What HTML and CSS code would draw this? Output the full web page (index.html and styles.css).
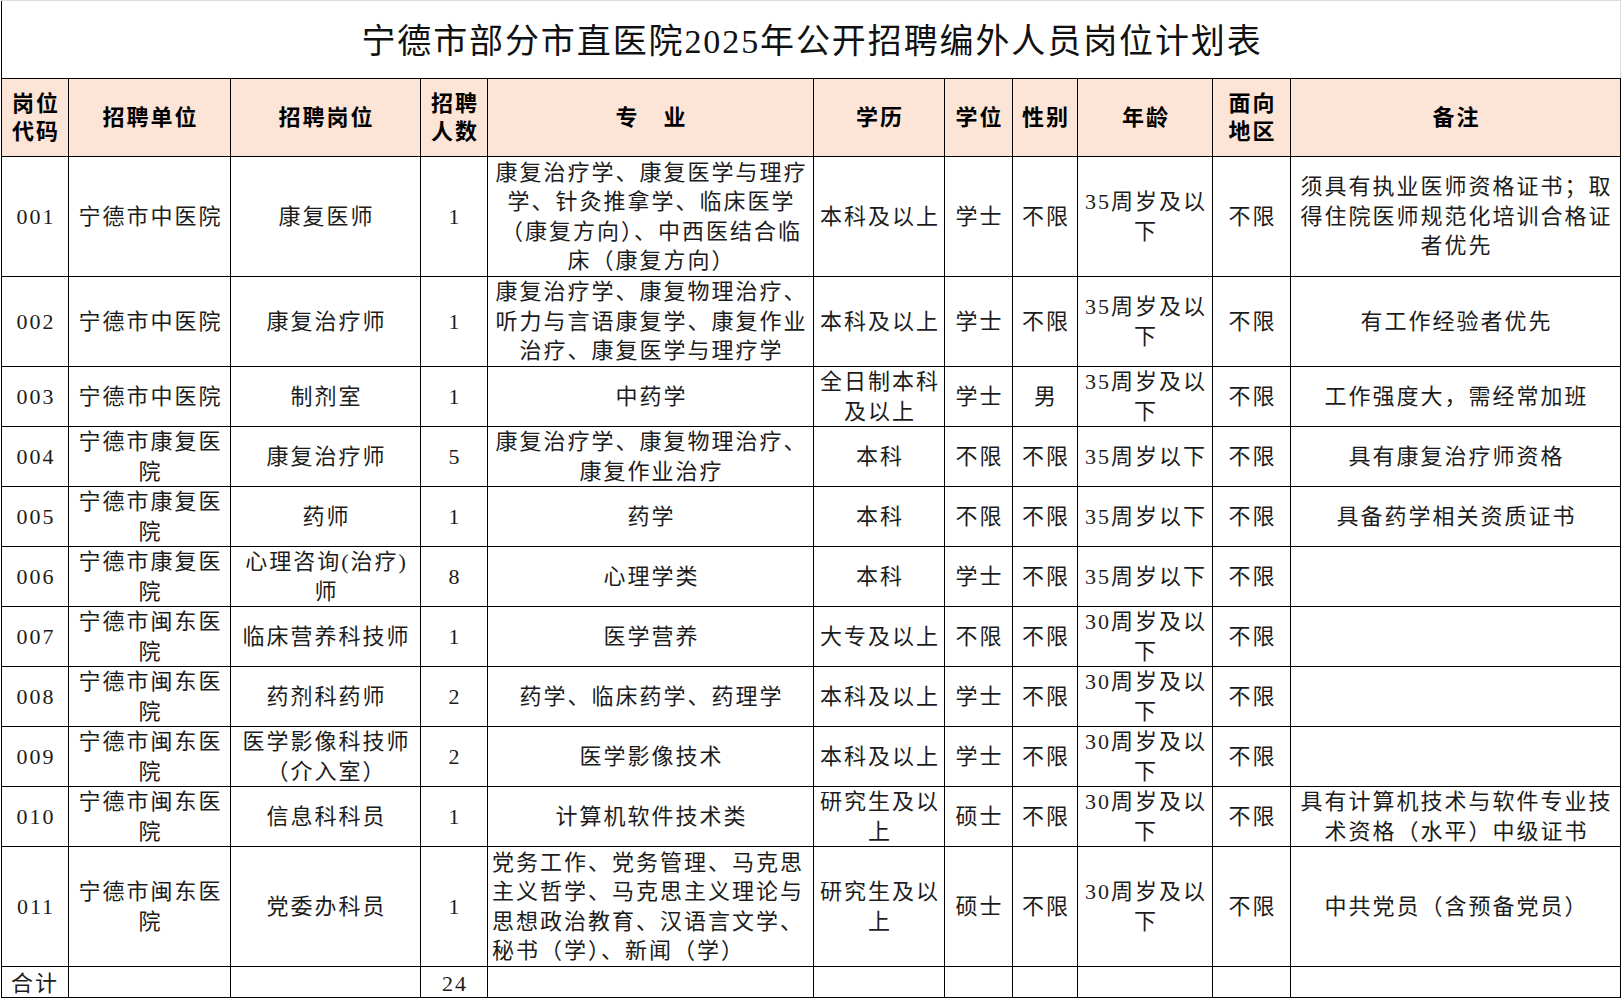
FILE: index.html
```html
<!DOCTYPE html>
<html lang="zh-CN">
<head>
<meta charset="utf-8">
<title>宁德市部分市直医院2025年公开招聘编外人员岗位计划表</title>
<link rel="stylesheet" href="styles.css">
</head>
<body>
<table class="sheet">
  <colgroup>
    <col class="c-code"><col class="c-unit"><col class="c-post"><col class="c-num"><col class="c-major"><col class="c-edu"><col class="c-degree"><col class="c-sex"><col class="c-age"><col class="c-area"><col class="c-note">
  </colgroup>
  <tr class="r-title"><td class="title" colspan="11">宁德市部分市直医院2025年公开招聘编外人员岗位计划表</td></tr>
  <tr class="r-head">
    <th>岗位<br>代码</th><th>招聘单位</th><th>招聘岗位</th><th>招聘<br>人数</th><th>专　业</th><th>学历</th><th>学位</th><th>性别</th><th>年龄</th><th>面向<br>地区</th><th>备注</th>
  </tr>
  <tr class="r4">
    <td>001</td><td>宁德市中医院</td><td>康复医师</td><td>1</td>
    <td>康复治疗学、康复医学与理疗<br>学、针灸推拿学、临床医学<br>（康复方向）、中西医结合临<br>床（康复方向）</td>
    <td>本科及以上</td><td>学士</td><td>不限</td><td>35周岁及以<br>下</td><td>不限</td>
    <td>须具有执业医师资格证书；取<br>得住院医师规范化培训合格证<br>者优先</td>
  </tr>
  <tr class="r3">
    <td>002</td><td>宁德市中医院</td><td>康复治疗师</td><td>1</td>
    <td>康复治疗学、康复物理治疗、<br>听力与言语康复学、康复作业<br>治疗、康复医学与理疗学</td>
    <td>本科及以上</td><td>学士</td><td>不限</td><td>35周岁及以<br>下</td><td>不限</td>
    <td>有工作经验者优先</td>
  </tr>
  <tr class="r2">
    <td>003</td><td>宁德市中医院</td><td>制剂室</td><td>1</td><td>中药学</td>
    <td>全日制本科<br>及以上</td><td>学士</td><td>男</td><td>35周岁及以<br>下</td><td>不限</td>
    <td>工作强度大，需经常加班</td>
  </tr>
  <tr class="r2">
    <td>004</td><td>宁德市康复医<br>院</td><td>康复治疗师</td><td>5</td>
    <td>康复治疗学、康复物理治疗、<br>康复作业治疗</td>
    <td>本科</td><td>不限</td><td>不限</td><td>35周岁以下</td><td>不限</td>
    <td>具有康复治疗师资格</td>
  </tr>
  <tr class="r2">
    <td>005</td><td>宁德市康复医<br>院</td><td>药师</td><td>1</td><td>药学</td>
    <td>本科</td><td>不限</td><td>不限</td><td>35周岁以下</td><td>不限</td>
    <td>具备药学相关资质证书</td>
  </tr>
  <tr class="r2">
    <td>006</td><td>宁德市康复医<br>院</td><td>心理咨询(治疗)<br>师</td><td>8</td><td>心理学类</td>
    <td>本科</td><td>学士</td><td>不限</td><td>35周岁以下</td><td>不限</td>
    <td></td>
  </tr>
  <tr class="r2">
    <td>007</td><td>宁德市闽东医<br>院</td><td>临床营养科技师</td><td>1</td><td>医学营养</td>
    <td>大专及以上</td><td>不限</td><td>不限</td><td>30周岁及以<br>下</td><td>不限</td>
    <td></td>
  </tr>
  <tr class="r2">
    <td>008</td><td>宁德市闽东医<br>院</td><td>药剂科药师</td><td>2</td><td>药学、临床药学、药理学</td>
    <td>本科及以上</td><td>学士</td><td>不限</td><td>30周岁及以<br>下</td><td>不限</td>
    <td></td>
  </tr>
  <tr class="r2">
    <td>009</td><td>宁德市闽东医<br>院</td><td>医学影像科技师<br>（介入室）</td><td>2</td><td>医学影像技术</td>
    <td>本科及以上</td><td>学士</td><td>不限</td><td>30周岁及以<br>下</td><td>不限</td>
    <td></td>
  </tr>
  <tr class="r2">
    <td>010</td><td>宁德市闽东医<br>院</td><td>信息科科员</td><td>1</td><td>计算机软件技术类</td>
    <td>研究生及以<br>上</td><td>硕士</td><td>不限</td><td>30周岁及以<br>下</td><td>不限</td>
    <td>具有计算机技术与软件专业技<br>术资格（水平）中级证书</td>
  </tr>
  <tr class="r4">
    <td>011</td><td>宁德市闽东医<br>院</td><td>党委办科员</td><td>1</td>
    <td class="left">党务工作、党务管理、马克思<br>主义哲学、马克思主义理论与<br>思想政治教育、汉语言文学、<br>秘书（学）、新闻（学）</td>
    <td>研究生及以<br>上</td><td>硕士</td><td>不限</td><td>30周岁及以<br>下</td><td>不限</td>
    <td>中共党员（含预备党员）</td>
  </tr>
  <tr class="r-total">
    <td class="left total-label">合计</td><td></td><td></td><td>24</td><td></td><td></td><td></td><td></td><td></td><td></td><td></td>
  </tr>
</table>
</body>
</html>
```

FILE: styles.css
```css
html, body {
  margin: 0;
  padding: 0;
  background: #ffffff;
}

body {
  font-family: "Liberation Serif", "Noto Sans CJK SC", serif;
  color: #1c1c1c;
  overflow: hidden;
}

.sheet {
  border-collapse: collapse;
  table-layout: fixed;
  width: 1620px;
  margin-left: 1px;
}

.c-code { width: 67px; }
.c-unit { width: 162px; }
.c-post { width: 190px; }
.c-num { width: 67px; }
.c-major { width: 326px; }
.c-edu { width: 131px; }
.c-degree { width: 68px; }
.c-sex { width: 65px; }
.c-age { width: 135px; }
.c-area { width: 78px; }
.c-note { width: 330px; }

.sheet td,
.sheet th {
  border: 1px solid #000;
  padding: 0 0 0 2px;
  text-align: center;
  vertical-align: middle;
  font-size: 22px;
  line-height: 29.5px;
  letter-spacing: 2px;
  white-space: nowrap;
  overflow: visible;
  box-sizing: border-box;
}

.sheet th {
  background: #fce4d6;
  font-weight: 700;
  line-height: 28px;
  color: #000;
}

.sheet td.title {
  height: 78px;
  font-size: 34px;
  letter-spacing: 1.9px;
  line-height: 40px;
  padding-top: 4px;
  padding-left: 2px;
  border-top: 1px solid #dcdcdc;
  border-right: 1px solid #dcdcdc;
  color: #111;
}

.r-head th { height: 78px; }
.r4 td { height: 120px; }
.r3 td { height: 90px; }
.r2 td { height: 60px; }
.r-total td { height: 31px; line-height: 26px; padding-top: 4px; }

.sheet td.left {
  text-align: left;
  padding-left: 4px;
}

.sheet td.total-label {
  padding-left: 9px;
}
```
